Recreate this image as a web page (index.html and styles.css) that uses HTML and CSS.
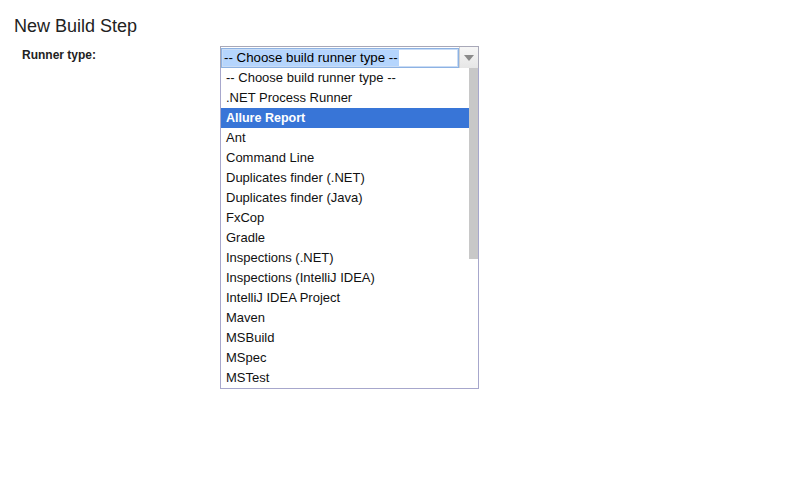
FILE: index.html
```html
<!DOCTYPE html>
<html>
<head>
<meta charset="utf-8">
<link rel="stylesheet" href="styles.css">
</head>
<body>
<h1 class="title">New Build Step</h1>
<div class="row">
  <div class="label">Runner type:</div>
  <div class="combo">
    <div class="combo-head">
      <div class="combo-field"><span class="combo-sel">-- Choose build runner type --</span></div>
      <div class="combo-btn"><span class="tri"></span></div>
    </div>
    <div class="runner-list">
      <div class="items">
        <div class="item">-- Choose build runner type --</div>
        <div class="item">.NET Process Runner</div>
        <div class="item item-active">Allure Report</div>
        <div class="item">Ant</div>
        <div class="item">Command Line</div>
        <div class="item">Duplicates finder (.NET)</div>
        <div class="item">Duplicates finder (Java)</div>
        <div class="item">FxCop</div>
        <div class="item">Gradle</div>
        <div class="item">Inspections (.NET)</div>
        <div class="item">Inspections (IntelliJ IDEA)</div>
        <div class="item">IntelliJ IDEA Project</div>
        <div class="item">Maven</div>
        <div class="item">MSBuild</div>
        <div class="item">MSpec</div>
        <div class="item">MSTest</div>
      </div>
      <div class="track"><div class="thumb"></div></div>
    </div>
  </div>
</div>
</body>
</html>
```
FILE: styles.css
```css
html, body {
  margin: 0;
  padding: 0;
  background: #fff;
  font-family: "Liberation Sans", Arial, sans-serif;
  color: #000;
}
.title {
  margin: 0;
  padding: 16px 0 0 14px;
  font-size: 18px;
  font-weight: normal;
  line-height: 20px;
  color: #222;
}
.row {
  display: flex;
  align-items: flex-start;
  padding: 10px 0 0 22px;
}
.label {
  width: 198px;
  font-size: 12px;
  font-weight: bold;
  line-height: 18px;
  color: #222;
}
.combo {
  display: flex;
  flex-direction: column;
  width: 259px;
}
.combo-head {
  display: flex;
  height: 22px;
  box-sizing: border-box;
  border: 1px solid #a8a8b8;
  border-bottom: none;
  background: #fff;
  padding-top: 1px;
}
.combo-field {
  flex: 1;
  border: 1px solid #8db2e3;
  box-shadow: inset 0 0 0 1px #c9dcf5;
  display: flex;
  align-items: center;
  padding-left: 1px;
  height: 20px;
  box-sizing: border-box;
}
.combo-sel {
  background: #b5d5fd;
  font-size: 13.3px;
  line-height: 16px;
  padding: 0 1px;
}
.combo-btn {
  width: 18px;
  display: flex;
  align-items: center;
  justify-content: center;
  background: linear-gradient(#f6f6f6, #e6e6e6);
  border-left: 1px solid #d0d0d0;
  margin-top: -1px;
}
.tri {
  width: 0;
  height: 0;
  border-left: 5px solid transparent;
  border-right: 5px solid transparent;
  border-top: 6px solid #8a8a8a;
}
.runner-list {
  display: flex;
  border: 1px solid #a7a7cc;
  border-top: none;
  background: #fff;
}
.items {
  flex: 1;
}
.item {
  height: 20px;
  line-height: 20px;
  font-size: 13px;
  padding-left: 5px;
  color: #111;
  white-space: nowrap;
}
.item-active {
  background: #3875d7;
  color: #fff;
  font-weight: bold;
  font-size: 12.5px;
}
.track {
  width: 9px;
  background: #fff;
}
.thumb {
  height: 191px;
  background: #c8c8c8;
}
```
